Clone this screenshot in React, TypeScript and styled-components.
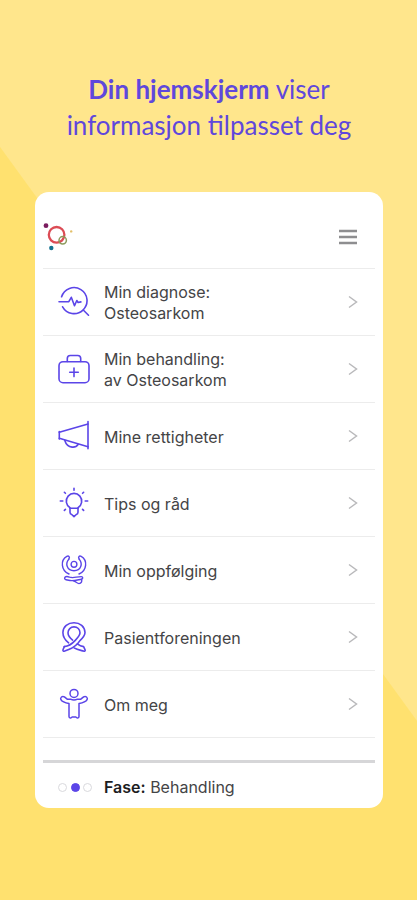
import React from "react";
import styled, { createGlobalStyle } from "styled-components";

const GlobalStyle = createGlobalStyle`
  *, *::before, *::after { box-sizing: border-box; }
  body {
    margin: 0;
    font-family: "Inter", "Liberation Sans", sans-serif;
    color: #444446;
  }
`;

const Page = styled.main`
  min-height: 100vh;
  padding: 71px 34px 92px 35px;
  display: flex;
  flex-direction: column;
  background: linear-gradient(234deg, #ffe68c calc(50% - 10px), #ffe16f calc(50% - 9px));
`;

const Title = styled.h1`
  margin: 0 0 49px;
  text-align: center;
  font-family: "Lato", sans-serif;
  font-size: 26px;
  line-height: 36px;
  font-weight: 400;
  color: #5f48dc;

  strong { font-weight: 700; }
`;

const Card = styled.section`
  padding: 0 8px;
  border-radius: 14px;
  background: #fff;
`;

const Header = styled.header`
  display: flex;
  align-items: center;
  justify-content: space-between;
  height: 77px;
  padding: 14px 18px 0 0;
  border-bottom: 1px solid #ececec;
`;

const LogoLink = styled.a`
  display: flex;
`;

const MenuButton = styled.button`
  display: flex;
  padding: 0;
  border: 0;
  background: none;
  cursor: pointer;
`;

const List = styled.ul`
  margin: 0;
  padding: 0;
  list-style: none;
`;

const Row = styled.li`
  border-bottom: 1px solid #ececec;
`;

const RowLink = styled.a`
  display: grid;
  grid-template-columns: 32px 1fr 10px;
  column-gap: 14px;
  align-items: center;
  height: 66px;
  padding: 0 17px 0 15px;
  color: inherit;
  text-decoration: none;
`;

const Label = styled.span`
  font-size: 16px;
  line-height: 21px;
  padding-top: 2px;
`;

const Footer = styled.footer`
  display: grid;
  grid-template-columns: 32px 1fr;
  column-gap: 14px;
  align-items: center;
  margin-top: 22px;
  height: 48px;
  padding: 3px 15px 0;
  border-top: 3px solid #d6d6d8;
`;

const Dots = styled.div`
  display: flex;
  justify-content: space-between;
  width: 34px;
`;

const Dot = styled.span<{ $active?: boolean }>`
  width: 9px;
  height: 9px;
  border-radius: 50%;
  border: 1px solid ${(p) => (p.$active ? "#5b45e8" : "#d9d9dd")};
  background: ${(p) => (p.$active ? "#5b45e8" : "transparent")};
`;

const Phase = styled.p`
  margin: 0;
  font-size: 16px;
  line-height: 21px;

  strong { font-weight: 600; color: #1d1d1f; }
`;

function Icon({ children }: { children: React.ReactNode }) {
  return (
    <svg width="32" height="32" viewBox="0 0 32 32" fill="none" stroke="#5b45e8"
      strokeWidth="1.6" strokeLinecap="round" strokeLinejoin="round" aria-hidden="true">
      {children}
    </svg>
  );
}

const DiagnoseIcon = () => (
  <Icon>
    <path d="M3.6 10.8A13 13 0 1 1 4.6 20.8" />
    <path d="M1 15.7h9.8l2.5-4.400 3.200 8.400 2.300-5.200 1.300 2 2.800-.6" />
    <path d="M25.500 24.200l5 5" />
  </Icon>
);

const TreatmentIcon = () => (
  <Icon>
    <rect x="1" y="8.7" width="30" height="21" rx="4" />
    <path d="M9.300 8.400V5.500a3 3 0 0 1 3-3h7.400a3 3 0 0 1 3 3v2.900" />
    <path d="M16 15v8.600M11.700 19.300h8.600" />
  </Icon>
);

const RightsIcon = () => (
  <Icon>
    <path d="M30 1.600v27.200M1.300 11.500v7.600" />
    <path d="M1.300 12.300L30 4M1.300 18.300L30 26.800" />
    <path d="M6.800 20.500c1.200 4 3.700 6.200 7.300 6.600 2.600.3 4.800-.8 6-2.600" />
  </Icon>
);

const TipsIcon = () => (
  <Icon>
    <path d="M12 21.200V20.700A7.700 7.700 0 1 1 20 20.700v.5" />
    <path d="M12 21.300h8v3.900a2.400 2.400 0 0 1-1.700 2.300L16 29.700l-2.300-2.200a2.400 2.400 0 0 1-1.700-2.300z" />
    <path d="M16 1.200v2M2.300 14h2.500M27.200 14h2.500M6.400 5.300l1 1M25.600 5.300l-1 1M6.400 23.400l1-1M25.600 23.400l-1-1" />
  </Icon>
);

const FollowUpIcon = () => (
  <Icon>
    <g strokeWidth="1.400">
      <circle cx="16" cy="10.300" r="2.900" />
      <path d="M10.800 5.200C12.200 3.200 10.800 1.200 8.800 2.300 5.500 4.200 4 7.800 4.400 11.300c.4 4 2.800 7 6.600 8.700" />
      <path d="M21.200 5.200C19.800 3.200 21.200 1.200 23.200 2.300c3.300 1.900 4.800 5.500 4.400 9-.4 4-2.800 7-6.600 8.700" />
      <path d="M10.800 5.200C7 9.500 8.800 16.800 16 16.800S25 9.500 21.200 5.200" />
      <path d="M7 23.200c1.400-1.500 3.200-.6 4.700 0 3.600 1.300 6.900-.6 11.500-.6 2 0 2 2.300.2 2.600-3.900.7-8.200 2-11.400 1.300L8 25.700C6.600 25.400 6.200 24.400 7 23.200z" />
      <path d="M15.500 26.800c2 .4 3.700 2.700 5.500 2.800 2.300 0 3.400-2.300 2.400-4.300" />
    </g>
  </Icon>
);

const RibbonIcon = () => (
  <Icon>
    <path d="M6.300 25.600L5 28.800c-.4 1.300.6 1.700 1.700 1.300l4-1.600c4.700-1.800 8.600-4.700 11-8.600C24.800 17 27 14.500 27 11.500 26.800 5.500 22 1.700 16 1.700S5 5.500 4.900 11.400c0 4.500 2.300 7.700 5.700 10.400" />
    <path d="M6.300 25.600c3.700-.4 7.800-2.800 10.500-5.700 2.900-3 5.200-5.200 5.200-8.100 0-3.500-2.600-5.900-6-5.900s-6 2.500-6 5.900c0 3.100 2 5.300 4.600 7.300" />
    <path d="M19.300 22.900c2 1.500 4 2.400 6.300 2.700l1.500 3.200c.5 1.300-.6 1.700-1.700 1.300-3.600-1-6.400-1.600-9.400-3.200" />
  </Icon>
);

const AboutIcon = () => (
  <Icon>
    <g strokeWidth="1.500">
      <circle cx="16" cy="5.400" r="4" />
      <path d="M12.500 11.200H9.200L6.400 8.900C4.300 7.500 1.900 9.600 2.900 11.700c1.300 2.300 4.700 3.300 8.100 3.900v12.900c0 1.900 2.300 2 3 .5h4c.7 1.500 3 1.400 3-.5V15.600c3.400-.6 6.800-1.600 8.100-3.900 1-2.100-1.400-4.200-3.500-2.800l-2.800 2.300h-3.300c-2 1-5 1-7 0z" />
    </g>
  </Icon>
);

const Logo = () => (
  <svg width="32" height="30" viewBox="0 0 32 30" fill="none" aria-hidden="true">
    <circle cx="13.600" cy="12.800" r="7.800" stroke="#dc4c55" strokeWidth="2.300" />
    <circle cx="19.700" cy="18.300" r="3.700" stroke="#8c9a5c" strokeWidth="1.500" />
    <circle cx="3" cy="3.700" r="2.400" fill="#7b1d5f" />
    <circle cx="8.300" cy="26" r="2.200" fill="#13718f" />
    <circle cx="28.200" cy="9.400" r="1.200" fill="#e3c069" />
  </svg>
);

const Chevron = () => (
  <svg width="10" height="14" viewBox="0 0 10 14" fill="none" stroke="#b9b9bb" strokeWidth="1.500" aria-hidden="true">
    <path d="M1 1.500L8.500 7 1 12.500" />
  </svg>
);

const items = [
  { id: "diagnose", icon: DiagnoseIcon, lines: ["Min diagnose:", "Osteosarkom"] },
  { id: "behandling", icon: TreatmentIcon, lines: ["Min behandling:", "av Osteosarkom"] },
  { id: "rettigheter", icon: RightsIcon, lines: ["Mine rettigheter"] },
  { id: "tips", icon: TipsIcon, lines: ["Tips og råd"] },
  { id: "oppfolging", icon: FollowUpIcon, lines: ["Min oppfølging"] },
  { id: "pasientforeningen", icon: RibbonIcon, lines: ["Pasientforeningen"] },
  { id: "om-meg", icon: AboutIcon, lines: ["Om meg"] },
];

export default function App() {
  return (
    <>
      <GlobalStyle />
      <Page>
        <Title>
          <strong>Din hjemskjerm</strong> viser
          <br />
          informasjon tilpasset deg
        </Title>
        <Card>
          <Header>
            <LogoLink href="#hjem" aria-label="Hjem"><Logo /></LogoLink>
            <MenuButton type="button" aria-label="Meny">
              <svg width="18" height="16" viewBox="0 0 18 16" stroke="#8e8e90" strokeWidth="2.400" aria-hidden="true">
                <path d="M0 2h18M0 8h18M0 14h18" />
              </svg>
            </MenuButton>
          </Header>
          <nav>
            <List>
              {items.map(({ id, icon: ItemIcon, lines }) => (
                <Row key={id}>
                  <RowLink href={`#${id}`}>
                    <ItemIcon />
                    <Label>
                      {lines.map((line, i) => (
                        <React.Fragment key={line}>
                          {i > 0 && <br />}
                          {line}
                        </React.Fragment>
                      ))}
                    </Label>
                    <Chevron />
                  </RowLink>
                </Row>
              ))}
            </List>
          </nav>
          <Footer>
            <Dots aria-hidden="true">
              <Dot />
              <Dot $active />
              <Dot />
            </Dots>
            <Phase><strong>Fase:</strong> Behandling</Phase>
          </Footer>
        </Card>
      </Page>
    </>
  );
}
